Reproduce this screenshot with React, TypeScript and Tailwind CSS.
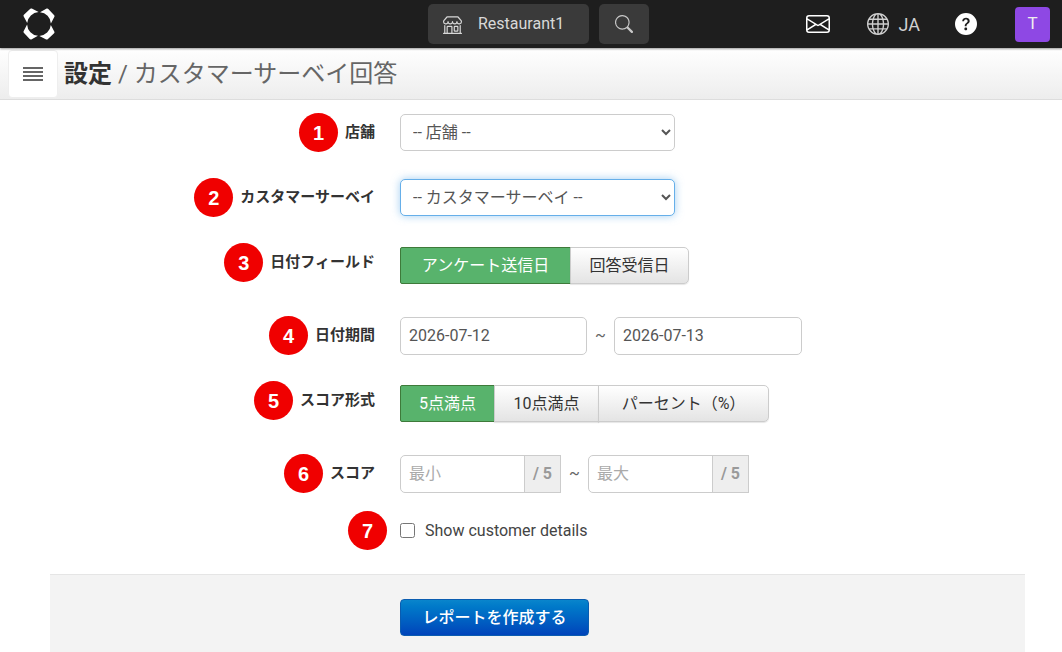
import React from 'react';
import { BsShop, BsSearch, BsEnvelope, BsGlobe, BsQuestionCircleFill } from 'react-icons/bs';

const FONT = "font-['Roboto','Noto_Sans_CJK_JP',sans-serif]";

function Logo() {
  const piece = 'M17 4.2 L23.7 0.6 Q24.6 0.2 25.3 0.9 L31.2 7.3 Q31.8 8 31.4 8.8 L27.9 15.6 A12 12 0 0 0 17 4.2 Z';
  return (
    <svg width="32" height="32" viewBox="0 0 32 32" fill="#fff">
      <path d={piece} />
      <path d={piece} transform="rotate(90 16 16)" />
      <path d={piece} transform="rotate(180 16 16)" />
      <path d={piece} transform="rotate(270 16 16)" />
    </svg>
  );
}

function Badge({ n }: { n: number }) {
  return (
    <span className="flex h-[39px] w-[39px] shrink-0 items-center justify-center rounded-full bg-[#f00000] text-[20px] font-bold text-white font-['Liberation_Sans',sans-serif]">
      {n}
    </span>
  );
}

function Row({
  n,
  label,
  mt,
  labelUp = false,
  children,
}: {
  n: number;
  label: string;
  mt: string;
  labelUp?: boolean;
  children: React.ReactNode;
}) {
  return (
    <div className={`flex ${labelUp ? 'items-start' : 'items-center'} ${mt}`}>
      <div className={`flex w-[325px] items-center justify-end gap-[7px] ${labelUp ? '-mt-[4px]' : ''}`}>
        <Badge n={n} />
        <span className="text-[15px] font-bold text-[#333]">{label}</span>
      </div>
      <div className="ml-[25px] flex items-center">{children}</div>
    </div>
  );
}

function Segmented({ items, widths }: { items: string[]; widths: string[] }) {
  return (
    <div className="flex h-[37px]">
      {items.map((t, i) =>
        i === 0 ? (
          <button
            key={t}
            className={`${widths[i]} h-full rounded-l-[2px] border border-[#3e7a3a] bg-[#58b36c] text-[16px] text-white`}
          >
            {t}
          </button>
        ) : (
          <button
            key={t}
            className={`${widths[i]} -ml-px h-full border border-[#ccc] bg-gradient-to-b from-white to-[#e4e4e4] text-[16px] text-[#333] shadow-[0_1px_1px_rgba(0,0,0,0.1)] ${
              i === items.length - 1 ? 'rounded-r-[5px]' : ''
            }`}
          >
            {t}
          </button>
        ),
      )}
    </div>
  );
}

function ScoreInput({ placeholder }: { placeholder: string }) {
  return (
    <div className="flex h-[38px]">
      <input
        placeholder={placeholder}
        className="h-full w-[125px] rounded-l-[5px] border border-[#ccc] bg-white px-2 text-[16px] text-[#555] outline-none placeholder:text-[#aaa]"
      />
      <span className="-ml-px flex h-full w-[37px] items-center justify-center border border-[#ccc] bg-[#eee] text-[16px] font-bold text-[#999]">
        / 5
      </span>
    </div>
  );
}

export default function App() {
  return (
    <div className={`h-[652px] w-[1062px] overflow-hidden bg-white ${FONT}`}>
      {/* top bar */}
      <header className="flex h-[48px] items-center bg-[#1e1e1e] pl-[23px] pr-[12px] shadow-[0_1px_2px_rgba(0,0,0,0.4)] relative z-10">
        <Logo />
        <div className="ml-[373px] flex h-[40px] w-[161px] items-center rounded-[5px] bg-[#3a3a3a] pl-[15px] text-[16px] text-[#d8d8d8]">
          <BsShop size={19} />
          <span className="ml-[16px]">Restaurant1</span>
        </div>
        <div className="ml-[10px] flex h-[40px] w-[50px] items-center justify-center rounded-[5px] bg-[#3a3a3a] text-[#c8c8c8]">
          <BsSearch size={18} />
        </div>
        <div className="ml-auto flex items-center text-white">
          <BsEnvelope size={24} />
          <BsGlobe size={22} className="ml-[37px] text-[#d0d0d0]" />
          <span className="ml-[10px] text-[18px] text-[#d0d0d0]">JA</span>
          <BsQuestionCircleFill size={22} className="ml-[35px]" />
          <span className="ml-[38px] flex h-[35px] w-[35px] items-center justify-center rounded-[4px] bg-[#8e48e4] text-[17px] text-[#eee]">
            T
          </span>
        </div>
      </header>

      {/* breadcrumb bar */}
      <div className="flex h-[52px] items-center border-b border-[#ddd] bg-gradient-to-b from-white to-[#ededed] pl-[8px]">
        <button className="flex h-[48px] w-[50px] items-center justify-center rounded-[4px] border border-[#eee] bg-white">
          <svg width="22" height="16" viewBox="0 0 22 16" stroke="#333" strokeWidth="1.4">
            <path d="M1 2h20M1 6h20M1 10h20M1 14h20" />
          </svg>
        </button>
        <h1 className="ml-[6px] text-[24px] text-[#666]">
          <span className="font-bold text-[#333]">設定</span> / カスタマーサーベイ回答
        </h1>
      </div>

      {/* form */}
      <main className="mx-[50px] w-[975px]">
        <Row n={1} label="店舗" mt="mt-[13px]">
          <select className="h-[37px] w-[275px] rounded-[5px] border border-[#ccc] bg-white pl-[8px] text-[16px] text-[#555] outline-none">
            <option>-- 店舗 --</option>
          </select>
        </Row>

        <Row n={2} label="カスタマーサーベイ" mt="mt-[26px]">
          <select className="h-[37px] w-[275px] rounded-[5px] border border-[#66afe9] bg-white pl-[8px] text-[16px] text-[#555] shadow-[0_0_8px_rgba(102,175,233,0.6)] outline-none">
            <option>-- カスタマーサーベイ --</option>
          </select>
        </Row>

        <Row n={3} label="日付フィールド" mt="mt-[30px]" labelUp>
          <Segmented items={['アンケート送信日', '回答受信日']} widths={['w-[171px]', 'w-[119px]']} />
        </Row>

        <Row n={4} label="日付期間" mt="mt-[32px]">
          <div className="flex items-center">
            <input
              defaultValue="2026-07-12"
              className="h-[38px] w-[187px] rounded-[5px] border border-[#ccc] px-2 text-[16px] text-[#555] outline-none"
            />
            <span className="w-[27px] text-center text-[16px] text-[#666]">~</span>
            <input
              defaultValue="2026-07-13"
              className="h-[38px] w-[188px] rounded-[5px] border border-[#ccc] px-2 text-[16px] text-[#555] outline-none"
            />
          </div>
        </Row>

        <Row n={5} label="スコア形式" mt="mt-[30px]" labelUp>
          <Segmented
            items={['5点満点', '10点満点', 'パーセント（%）']}
            widths={['w-[95px]', 'w-[105px]', 'w-[171px]']}
          />
        </Row>

        <Row n={6} label="スコア" mt="mt-[32px]">
          <div className="flex items-center">
            <ScoreInput placeholder="最小" />
            <span className="w-[27px] text-center text-[16px] text-[#666]">~</span>
            <ScoreInput placeholder="最大" />
          </div>
        </Row>

        <div className="mt-[18px] flex items-center">
          <div className="flex w-[337px] justify-end">
            <Badge n={7} />
          </div>
          <label className="ml-[13px] flex items-center text-[16px] text-[#444]">
            <input type="checkbox" className="h-[15px] w-[15px]" />
            <span className="ml-[10px]">Show customer details</span>
          </label>
        </div>

        <div className="mt-[24px] h-[84px] border-t border-[#e5e5e5] bg-[#f3f3f3] pl-[350px] pt-[24px]">
          <button className="h-[37px] w-[189px] rounded-[4px] border border-[#0a5cb0] bg-gradient-to-b from-[#0a85cc] to-[#0043ba] text-[16px] font-medium text-white">
            レポートを作成する
          </button>
        </div>
      </main>
    </div>
  );
}
